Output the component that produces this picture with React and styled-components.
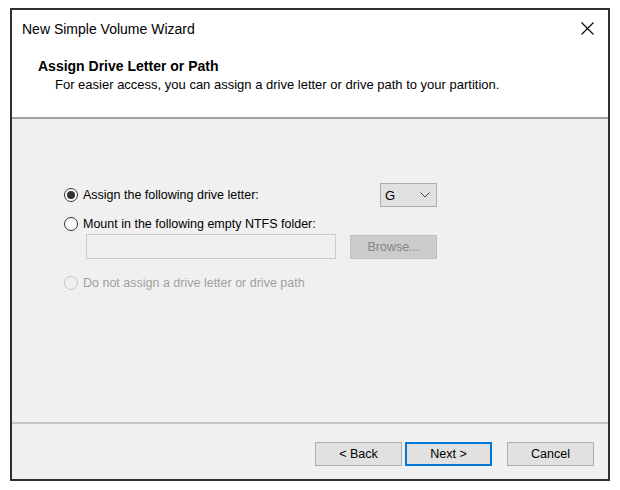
import React, { useState } from "react";
import styled, { createGlobalStyle } from "styled-components";

const GlobalStyle = createGlobalStyle`
  html, body {
    margin: 0;
    padding: 0;
    background: #ffffff;
  }
  body {
    font-family: "Liberation Sans", Arial, sans-serif;
    color: #000;
  }
  * {
    box-sizing: border-box;
  }
`;

const Page = styled.div`
  padding: 8px 0 0 10px;
`;

const Window = styled.div`
  width: 600px;
  height: 473px;
  border: 2px solid #2f2f2f;
  background: #f0f0f0;
  display: flex;
  flex-direction: column;
`;

const TitleBar = styled.div`
  height: 38px;
  background: #fff;
  display: flex;
  align-items: center;
  justify-content: space-between;
  padding: 0 14px 0 10px;
  font-size: 14px;
`;

const CloseIcon = styled.svg`
  width: 13px;
  height: 13px;
  margin-top: -2px;
`;

const Header = styled.div`
  height: 71px;
  background: #fff;
  padding: 10px 0 0 26px;
  border-bottom: 2px solid #a0a0a0;
`;

const HeaderTitle = styled.div`
  font-size: 14px;
  font-weight: bold;
  line-height: 16px;
`;

const HeaderText = styled.div`
  font-size: 13px;
  line-height: 16px;
  margin-top: 3px;
  padding-left: 17px;
`;

const Body = styled.div`
  flex: 1;
  padding: 64px 0 0 53px;
  border-bottom: 2px solid #c4c4c4;
`;

const Options = styled.div`
  width: 372px;
  display: flex;
  flex-direction: column;
`;

const Row = styled.div`
  display: flex;
  align-items: center;
  justify-content: space-between;
  margin-top: ${(p) => p.$top || 0}px;
  padding-left: ${(p) => p.$indent || 0}px;
`;

const OptionLabel = styled.label`
  display: flex;
  align-items: center;
  font-size: 12.5px;
  color: ${(p) => (p.$disabled ? "#a0a0a0" : "#000")};
`;

const RadioCircle = styled.span`
  width: 14px;
  height: 14px;
  border-radius: 50%;
  border: 1px solid ${(p) => (p.$disabled ? "#c6c6c6" : "#333")};
  background: ${(p) => (p.$disabled ? "#f0f0f0" : "#fff")};
  display: flex;
  align-items: center;
  justify-content: center;
  margin-right: 5px;
  margin-left: -1px;
  flex-shrink: 0;

  &::after {
    content: "";
    display: ${(p) => (p.$checked ? "block" : "none")};
    width: 8px;
    height: 8px;
    border-radius: 50%;
    background: #333;
  }
`;

const Dropdown = styled.div`
  width: 57px;
  height: 24px;
  border: 1px solid #adadad;
  background: #e1e1e1;
  display: flex;
  align-items: center;
  justify-content: space-between;
  padding: 0 6px 0 4px;
  font-size: 13px;
`;

const PathField = styled.div`
  width: 250px;
  height: 25px;
  border: 1px solid #cccccc;
  background: #f0f0f0;
`;

const Button = styled.button`
  width: ${(p) => p.$width || 87}px;
  height: 24px;
  font-family: inherit;
  font-size: 12.5px;
  background: ${(p) => (p.$disabled ? "#cccccc" : "#e1e1e1")};
  color: ${(p) => (p.$disabled ? "#838383" : "#000")};
  border: ${(p) =>
    p.$primary ? "2px solid #0078d7" : `1px solid ${p.$disabled ? "#bfbfbf" : "#adadad"}`};
  padding: 0;
  margin-left: ${(p) => p.$gap || 0}px;
  cursor: default;
`;

const ButtonBar = styled.div`
  height: 55px;
  display: flex;
  justify-content: flex-end;
  align-items: flex-start;
  padding: 18px 14px 0 0;
`;

export default function App() {
  const [choice, setChoice] = useState("letter");

  return (
    <>
      <GlobalStyle />
      <Page>
        <Window>
          <TitleBar>
            <span>New Simple Volume Wizard</span>
            <CloseIcon viewBox="0 0 13 13">
              <path d="M0.5 0.5 L12.5 12.5 M12.5 0.5 L0.5 12.5" stroke="#000" strokeWidth="1.1" />
            </CloseIcon>
          </TitleBar>
          <Header>
            <HeaderTitle>Assign Drive Letter or Path</HeaderTitle>
            <HeaderText>
              For easier access, you can assign a drive letter or drive path to your partition.
            </HeaderText>
          </Header>
          <Body>
            <Options>
              <Row>
                <OptionLabel onClick={() => setChoice("letter")}>
                  <RadioCircle $checked={choice === "letter"} />
                  Assign the following drive letter:
                </OptionLabel>
                <Dropdown>
                  <span>G</span>
                  <svg width="10" height="6" viewBox="0 0 10 6">
                    <path d="M0.5 0.5 L5 5 L9.5 0.5" fill="none" stroke="#444" strokeWidth="1" />
                  </svg>
                </Dropdown>
              </Row>
              <Row $top={10}>
                <OptionLabel onClick={() => setChoice("folder")}>
                  <RadioCircle $checked={choice === "folder"} />
                  Mount in the following empty NTFS folder:
                </OptionLabel>
              </Row>
              <Row $top={3} $indent={21}>
                <PathField />
                <Button $disabled>Browse...</Button>
              </Row>
              <Row $top={17}>
                <OptionLabel $disabled>
                  <RadioCircle $disabled />
                  Do not assign a drive letter or drive path
                </OptionLabel>
              </Row>
            </Options>
          </Body>
          <ButtonBar>
            <Button>&lt; Back</Button>
            <Button $primary $gap={3}>Next &gt;</Button>
            <Button $gap={15}>Cancel</Button>
          </ButtonBar>
        </Window>
      </Page>
    </>
  );
}
